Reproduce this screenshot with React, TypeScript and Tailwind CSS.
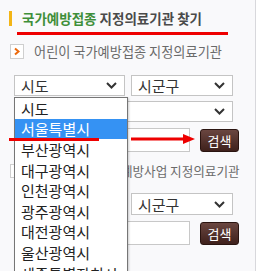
import React from "react";

const SIDO = [
  "시도",
  "서울특별시",
  "부산광역시",
  "대구광역시",
  "인천광역시",
  "광주광역시",
  "대전광역시",
  "울산광역시",
  "세종특별자치시",
];

function Chevron() {
  return (
    <svg width="11" height="7" viewBox="0 0 11 7" className="shrink-0">
      <path d="M1 1 L5.5 5.5 L10 1" fill="none" stroke="#333" strokeWidth="2" />
    </svg>
  );
}

function Select({ label, className }: { label: string; className: string }) {
  return (
    <div
      className={`flex items-center justify-between bg-white border border-[#c4c4c4] pl-[6px] pr-[7px] text-[15px] text-[#333] leading-none ${className}`}
    >
      <span>{label}</span>
      <Chevron />
    </div>
  );
}

function Arrow() {
  return (
    <svg width="8" height="9" viewBox="0 0 8 9">
      <path d="M2 1.5 L5.5 4.5 L2 7.5" fill="none" stroke="#ec6a0c" strokeWidth="2" />
    </svg>
  );
}

function SearchRow() {
  return (
    <div className="flex items-center pl-[14px]">
      <div className="w-[176px] h-[24px] bg-white border border-[#c8c8c8]" />
      <button className="ml-[10px] w-[39px] h-[23px] rounded-[3px] border border-[#2a1410] bg-gradient-to-b from-[#6a4640] to-[#3f211c] text-white text-[13px] leading-none">
        검색
      </button>
    </div>
  );
}

export default function App() {
  return (
    <div
      className="relative w-[261px] h-[271px] overflow-hidden bg-white"
      style={{ fontFamily: '"Noto Sans CJK KR", "Noto Sans", sans-serif' }}
    >
      <div className="w-[256px] h-full bg-[#f9f9fb] border-r border-[#d8d8dc]">
        {/* 제목 */}
        <div className="flex items-center pt-[11px]">
          <div className="ml-[9px] w-[3px] h-[15px] bg-[#f3b516]" />
          <h2 className="ml-[10px] text-[13.5px] leading-[15px] font-bold text-[#4a4a4a] whitespace-nowrap">
            <span className="text-[#3f8f3a]">국가예방접종</span> 지정의료기관 찾기
          </h2>
        </div>

        {/* 어린이 */}
        <div className="flex items-center mt-[18px]">
          <div className="ml-[10px] w-[14px] h-[15px] bg-white border border-[#cfcfcf] flex items-center justify-center">
            <Arrow />
          </div>
          <span className="ml-[10px] text-[13.2px] leading-none text-[#6a6a6a] whitespace-nowrap">
            어린이 국가예방접종 지정의료기관
          </span>
        </div>

        <div className="flex mt-[16px] pl-[14px] gap-[6px]">
          <Select label="시도" className="w-[111px] h-[21px]" />
          <Select label="시군구" className="w-[102px] h-[21px]" />
        </div>
        <div className="mt-[5px] pl-[14px]">
          <Select label="읍면동" className="w-[219px] h-[21px]" />
        </div>
        <div className="mt-[6px]">
          <SearchRow />
        </div>

        {/* 인플루엔자 */}
        <div className="flex items-center mt-[12px]">
          <div className="ml-[10px] w-[14px] h-[14px] bg-white border border-[#cfcfcf]" />
          <span className="ml-[13px] text-[12.6px] leading-none text-[#6a6a6a] whitespace-nowrap">
            인플루엔자 국가예방사업 지정의료기관
          </span>
        </div>

        <div className="flex mt-[15px] pl-[14px] gap-[6px]">
          <Select label="시도" className="w-[111px] h-[22px]" />
          <Select label="시군구" className="w-[102px] h-[22px]" />
        </div>
        <div className="mt-[6px]">
          <SearchRow />
        </div>
      </div>

      {/* 펼친 시도 목록 */}
      <ul className="absolute left-[14px] top-[97px] w-[114px] bg-white border border-[#767676] shadow-[1px_1px_2px_rgba(0,0,0,0.2)]">
        {SIDO.map((name, i) => (
          <li
            key={name}
            className={`h-[20.6px] flex items-center pl-[6px] text-[15px] leading-none whitespace-nowrap ${
              i === 1 ? "bg-[#3592f3] text-white" : "text-[#222]"
            }`}
          >
            {name}
          </li>
        ))}
      </ul>

      {/* 빨간 표시 */}
      <div className="absolute left-[17px] top-[32px] w-[211px] h-[3px] bg-[#ee0000]" />
      <div className="absolute left-[9px] top-[138px] w-[90px] h-[3px] bg-[#ee0000]" />
      <svg className="absolute left-[131px] top-[134px]" width="66" height="10" viewBox="0 0 66 10">
        <rect x="0" y="3.5" width="54" height="3" fill="#ee0000" />
        <path d="M52 0 L64 5 L52 10 Z" fill="#ee0000" />
      </svg>
    </div>
  );
}
